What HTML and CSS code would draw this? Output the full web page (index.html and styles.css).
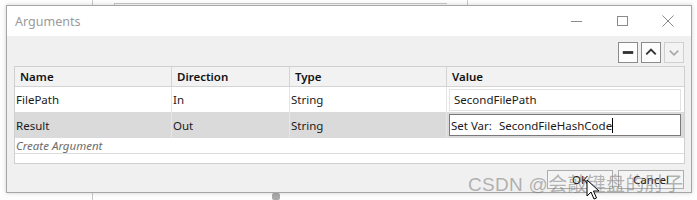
FILE: index.html
```html
<!DOCTYPE html>
<html>
<head>
<meta charset="utf-8">
<link rel="stylesheet" href="styles.css">
</head>
<body>
<div class="desktop">
  <div class="bg-line bg-h"></div>
  <div class="bg-line bg-v1"></div>
  <div class="bg-line bg-v2"></div>
  <div class="bg-line bg-v3"></div>
  <div class="bg-blob"></div>

  <div class="dialog">
    <div class="titlebar">
      <span class="title">Arguments</span>
      <div class="winbtns">
        <svg class="wb" width="46" height="30" viewBox="0 0 46 30"><line x1="18" y1="15.5" x2="29" y2="15.5" stroke="#8a8a8a" stroke-width="1"/></svg>
        <svg class="wb" width="46" height="30" viewBox="0 0 46 30"><rect x="18.5" y="10.5" width="10" height="9" fill="none" stroke="#8a8a8a" stroke-width="1"/></svg>
        <svg class="wb" width="46" height="30" viewBox="0 0 46 30"><path d="M17.5 9.5 L28.5 20.5 M28.5 9.5 L17.5 20.5" stroke="#8a8a8a" stroke-width="1" fill="none"/></svg>
      </div>
    </div>
    <div class="body">
      <div class="toolbar">
        <span class="tbtn"><svg width="19" height="19" viewBox="0 0 19 19"><rect x="4" y="8" width="11" height="3" fill="#333"/></svg></span>
        <span class="tbtn"><svg width="19" height="19" viewBox="0 0 19 19"><path d="M4.5 11.5 L9.5 6.5 L14.5 11.5" fill="none" stroke="#333" stroke-width="2"/></svg></span>
        <span class="tbtn disabled"><svg width="19" height="19" viewBox="0 0 19 19"><path d="M5 7.5 L9.5 12 L14 7.5" fill="none" stroke="#a8a8a8" stroke-width="1.6"/></svg></span>
      </div>
      <div class="grid">
        <div class="hcell">Name</div>
        <div class="hcell">Direction</div>
        <div class="hcell">Type</div>
        <div class="hcell last">Value</div>

        <div class="cell">FilePath</div>
        <div class="cell">In</div>
        <div class="cell">String</div>
        <div class="cell vcell"><div class="vbox">SecondFilePath</div></div>

        <div class="cell sel">Result</div>
        <div class="cell sel">Out</div>
        <div class="cell sel">String</div>
        <div class="cell sel vcell"><div class="vbox edit"><span class="setvar">Set Var:</span><span class="val">SecondFileHashCode</span><span class="caret"></span></div></div>

        <div class="create">Create Argument</div>
        <div class="filler"></div>
      </div>
      <div class="actions">
        <button class="btn">OK</button>
        <button class="btn">Cancel</button>
      </div>
    </div>
  </div>

  <div class="watermark">CSDN @会敲键盘的肘子</div>
  <svg class="cursor" width="14" height="22" viewBox="0 0 14 22"><path d="M1 1 L1 17 L5 13 L8 20 L10.5 19 L7.5 12 L13 12 Z" fill="#fff" stroke="#000" stroke-width="1" stroke-linejoin="round"/></svg>
</div>
</body>
</html>
```
FILE: styles.css
```css
* { box-sizing: border-box; }
html, body { margin: 0; padding: 0; }
body {
  width: 697px;
  height: 200px;
  overflow: hidden;
  background: #fdfdfd;
  font-family: "Noto Sans", "Open Sans", sans-serif;
  font-size: 11.5px;
  color: #1a1a1a;
}
.desktop {
  position: relative;
  width: 697px;
  height: 200px;
  padding: 5px 0 0 6px;
}
.bg-line { position: absolute; background: #c8c8c8; }
.bg-h { left: 114px; top: 3px; width: 333px; height: 1px; }
.bg-v1 { left: 92px; top: 0; width: 1px; height: 200px; }
.bg-v2 { left: 467px; top: 0; width: 1px; height: 6px; }
.bg-v3 { left: 114px; top: 3px; width: 1px; height: 3px; }
.bg-blob { position: absolute; left: 272px; top: 193px; width: 8px; height: 7px; background: #a9a9a9; border-radius: 2px; }

.dialog {
  position: relative;
  width: 686px;
  height: 188px;
  border: 1px solid #a6a6a6;
  background: #f0f0f0;
  box-shadow: 0 0 4px rgba(0,0,0,0.18);
  display: flex;
  flex-direction: column;
}
.titlebar {
  height: 30px;
  background: #ffffff;
  display: flex;
  align-items: center;
  justify-content: space-between;
  padding-left: 8px;
}
.title { color: #9a9a9a; font-size: 12.5px; }
.winbtns { display: flex; }
.wb { display: block; }

.body {
  flex: 1;
  display: flex;
  flex-direction: column;
  padding: 6px 6px 3px 7px;
}
.toolbar {
  display: flex;
  justify-content: flex-end;
  gap: 3px;
  padding-right: 1px;
}
.tbtn {
  width: 20px;
  height: 21px;
  border: 1px solid #8c8c8c;
  background: #fdfdfd;
  display: flex;
  align-items: center;
  justify-content: center;
}
.tbtn.disabled { border-color: #d0d0d0; background: #f3f3f3; }

.grid {
  margin-top: 3px;
  border: 1px solid #cfcfcf;
  background: #fff;
  display: grid;
  grid-template-columns: 157px 118px 157px 1fr;
  grid-template-rows: 20px 25px 26px 16px 9px;
}
.hcell {
  background: #f2f2f2;
  border-right: 1px solid #d4d4d4;
  border-bottom: 1px solid #d4d4d4;
  font-weight: 600;
  padding-left: 5px;
  display: flex;
  align-items: center;
  color: #111;
}
.hcell.last { border-right: none; }
.cell {
  display: flex;
  align-items: center;
  padding-left: 1px;
  border-right: 1px solid #e4e4e4;
  background: #fff;
}
.cell.sel { background: #dadada; border-right-color: #e6e6e6; }
.vcell { border-right: none; padding: 0 3px 0 2px; }
.vbox {
  width: 100%;
  height: 22px;
  background: #fff;
  border: 1px solid #e2e2e2;
  display: flex;
  align-items: center;
  padding-left: 4px;
}
.vbox.edit { border-color: #7a7a7a; padding-left: 1px; }
.setvar { margin-right: 7px; }
.caret { display: inline-block; width: 1px; height: 15px; background: #000; }
.create {
  grid-column: 1 / -1;
  color: #6e6e6e;
  font-style: italic;
  padding-left: 1px;
  border-bottom: 1px solid #dcdcdc;
  display: flex;
  align-items: center;
}
.filler { grid-column: 1 / -1; }

.actions {
  margin-top: auto;
  display: flex;
  justify-content: flex-end;
  gap: 5px;
  padding-right: 1px;
}
.btn {
  width: 66px;
  height: 19px;
  border: 1px solid #adadad;
  background: #f4f4f4;
  font-family: "Noto Sans", "Open Sans", sans-serif;
  font-size: 11.5px;
  color: #111;
  padding: 0;
}

.watermark {
  position: absolute;
  left: 468px;
  top: 169px;
  font-family: "Liberation Sans", "Noto Sans CJK SC", sans-serif;
  font-size: 19px;
  letter-spacing: 0.3px;
  color: rgba(120,120,120,0.55);
  white-space: nowrap;
  pointer-events: none;
}
.cursor { position: absolute; left: 586px; top: 179px; }
```
